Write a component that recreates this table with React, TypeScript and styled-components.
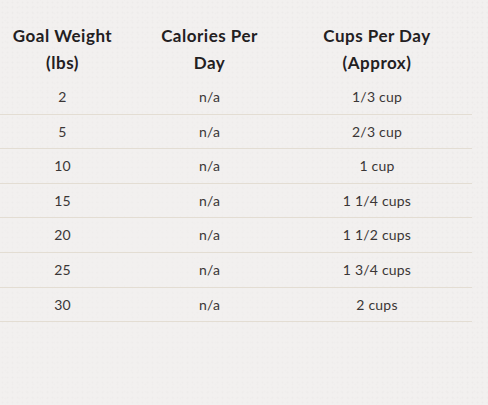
import React from "react";
import styled, { createGlobalStyle } from "styled-components";

const Global = createGlobalStyle`
  html, body { margin: 0; padding: 0; }
  body {
    width: 488px;
    height: 405px;
    overflow: hidden;
    background-color: #f2f0ef;
    background-image:
      radial-gradient(rgba(170,165,165,0.16) 0.8px, transparent 1.2px),
      radial-gradient(rgba(170,165,165,0.10) 0.8px, transparent 1.2px);
    background-size: 5px 5px, 7px 7px;
    background-position: 0 0, 2px 3px;
    font-family: "Lato", "Noto Sans", "Liberation Sans", sans-serif;
  }
`;

const Page = styled.div`
  width: 488px;
  height: 405px;
  background: radial-gradient(ellipse at 30% 60%, rgba(242,240,239,0.85), rgba(242,240,239,0.55));
`;

const Table = styled.div`
  width: 472px;
  display: flex;
  flex-direction: column;
`;

const Row = styled.div<{ $head?: boolean }>`
  display: grid;
  grid-template-columns: 125px 169px 166px;
  padding-right: 12px;
  border-bottom: ${(p) => (p.$head ? "none" : "1.5px solid #e3ddd3")};
`;

const HeadCell = styled.div<{ $side?: number }>`
  padding: 22px ${(p) => p.$side ?? 22}px 4px;
  text-align: center;
  font-weight: 700;
  font-size: 17px;
  letter-spacing: 0.5px;
  line-height: 27px;
  color: #23201f;
`;

const Cell = styled.div`
  padding: 8px 6px;
  text-align: center;
  font-size: 14px;
  letter-spacing: 0.2px;
  line-height: 17.6px;
  color: #3a3636;
`;

const rows: [string, string, string][] = [
  ["2", "n/a", "1/3 cup"],
  ["5", "n/a", "2/3 cup"],
  ["10", "n/a", "1 cup"],
  ["15", "n/a", "1 1/4 cups"],
  ["20", "n/a", "1 1/2 cups"],
  ["25", "n/a", "1 3/4 cups"],
  ["30", "n/a", "2 cups"],
];

export default function App() {
  return (
    <>
      <Global />
      <Page>
        <Table>
          <Row $head>
            <HeadCell $side={6}>Goal Weight (lbs)</HeadCell>
            <HeadCell>Calories Per Day</HeadCell>
            <HeadCell>Cups Per Day (Approx)</HeadCell>
          </Row>
          {rows.map((r) => (
            <Row key={r[0]}>
              <Cell>{r[0]}</Cell>
              <Cell>{r[1]}</Cell>
              <Cell>{r[2]}</Cell>
            </Row>
          ))}
        </Table>
      </Page>
    </>
  );
}
